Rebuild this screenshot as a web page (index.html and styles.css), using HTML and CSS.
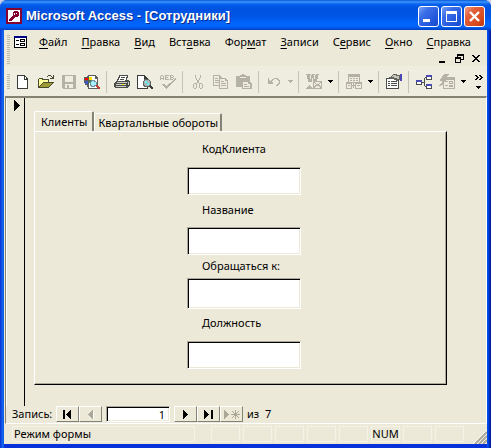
FILE: index.html
```html
<!DOCTYPE html>
<html lang="ru">
<head>
<meta charset="utf-8">
<title>Microsoft Access - [Сотрудники]</title>
<link rel="stylesheet" href="styles.css">
</head>
<body>
<div class="window">
  <header class="titlebar">
    <svg class="app-icon" width="16" height="16" viewBox="0 0 16 16" shape-rendering="crispEdges" aria-hidden="true">
      <rect width="16" height="16" fill="#84002e"/>
      <rect x="2" y="2" width="12" height="12" fill="#fff"/>
      <path fill="#84002e" d="M8 3h4v1h1v4h-1v1H9v1H8v1H7v1H6v1H3v-2h1v-1h1V9h1V8h1V4h1z"/>
      <path fill="#fff" d="M10 5h1v1h-1zM8 5h1v2H8z"/>
    </svg>
    <h1 class="title">Microsoft Access - [Сотрудники]</h1>
    <div class="captions">
      <button class="caption" aria-label="Свернуть"><svg width="19" height="19" viewBox="0 0 19 19" shape-rendering="crispEdges"><path fill="#fff" d="M4 12h7v3H4z"/></svg></button>
      <button class="caption" aria-label="Развернуть"><svg width="19" height="19" viewBox="0 0 19 19" shape-rendering="crispEdges"><path fill="#fff" fill-rule="evenodd" d="M4 4h11v11H4zM5 7v7h9V7z"/></svg></button>
      <button class="caption caption-close" aria-label="Закрыть"><svg width="19" height="19" viewBox="0 0 19 19"><path d="M5 5l9 9M14 5l-9 9" stroke="#fff" stroke-width="2.4"/></svg></button>
    </div>
  </header>

  <div class="client">
    <div class="menubar">
      <span class="grip"></span>
      <div class="menu-rows">
        <nav class="menu">
          <svg class="form-icon" width="13" height="12" viewBox="0 0 13 12" shape-rendering="crispEdges" aria-hidden="true">
            <path fill="#000" d="M0 0h13v12H0z"/><path fill="#fff" d="M1 2h11v9H1z"/><path fill="#000084" d="M0 0h13v2H0z"/>
            <path fill="#000" d="M2 4h3v1H2zM2 8h3v1H2zM6 3h5v3H6zM6 7h5v3H6z"/><path fill="#fff" d="M7 4h3v1H7zM7 8h3v1H7z"/>
          </svg>
          <button class="menu-item"><u>Ф</u>айл</button>
          <button class="menu-item"><u>П</u>равка</button>
          <button class="menu-item"><u>В</u>ид</button>
          <button class="menu-item">Вст<u>а</u>вка</button>
          <button class="menu-item">Фор<u>м</u>ат</button>
          <button class="menu-item"><u>З</u>аписи</button>
          <button class="menu-item">С<u>е</u>рвис</button>
          <button class="menu-item"><u>О</u>кно</button>
          <button class="menu-item"><u>С</u>правка</button>
        </nav>
        <div class="mdi">
          <button class="mdi-button" aria-label="Свернуть окно"><svg width="9" height="9" viewBox="0 0 9 9" shape-rendering="crispEdges"><path d="M1 7h6v2H1z"/></svg></button>
          <button class="mdi-button" aria-label="Восстановить окно"><svg width="9" height="9" viewBox="0 0 9 9" shape-rendering="crispEdges"><path fill-rule="evenodd" d="M2 0h7v6H6v3H0V3h2zM3 2v1h3v2h2V2zM1 5v3h4V5z"/></svg></button>
          <button class="mdi-button" aria-label="Закрыть окно"><svg width="9" height="9" viewBox="0 0 9 9" shape-rendering="crispEdges"><path d="M0 1h2v1h1v1h2V2h1V1h2v1H7v1H6v1H5v1h1v1h1v1h1v1H6V7H5V6H3v1H2v1H0V7h1V6h1V5h1V4H2V3H1V2H0z"/></svg></button>
        </div>
      </div>
    </div>

    <div class="toolbar" role="toolbar" aria-label="Режим формы">
      <span class="grip"></span>
      <button class="tool" aria-label="Создать"><svg width="16" height="16" viewBox="0 0 16 16" shape-rendering="crispEdges"><path fill="#393c39" d="M2 1h8v1h1v1h1v1h1v11H2z"/><path fill="#fff" d="M3 2h6v4h3v8H3zM10 3h1v2h-1z"/></svg></button>
      <button class="tool" aria-label="Открыть"><svg width="16" height="16" viewBox="0 0 16 16" shape-rendering="crispEdges"><path fill="#4a4a31" d="M10 1h3v1h-3zM9 2h1v1H9zM13 2h1v1h-1zM15 1h1v4h-4V4h2V3h1zM0 5h1V4h4v1h6v3h5v1h-1v1h-1v1h-1v1h-1v1h-1v1H0z"/><path fill="#ffff9c" d="M1 5h3v1h6v2H5v1H4v1H3v1H2v1H1z"/><path fill="#9c9a31" d="M5 9h9v1h-1v1h-1v1h-1v1H2v-1h1v-1h1v-1h1z"/></svg></button>
      <button class="tool" aria-label="Сохранить" disabled><svg width="16" height="16" viewBox="0 0 16 16" shape-rendering="crispEdges"><path fill="#b5b2a5" fill-rule="evenodd" d="M1 1h14v14H2v-1H1zM4 2v6h8V2zM4 10v4h2v-3h2v3h4v-4z"/></svg></button>
      <button class="tool" aria-label="Найти файл"><svg width="16" height="16" viewBox="0 0 16 16" shape-rendering="crispEdges"><path fill="#5a5d5a" d="M4 1h8v1h1v1h1v12H4v-2H3v-2H1V9H0V3h3V2h1z"/><path fill="#fff" d="M5 2h6v3h2v9H5z"/><path fill="#5a5d5a" d="M1 3h7v6H1z"/><path fill="#ff0000" d="M1 4h3v2H1z"/><path fill="#ffdf00" d="M5 3h3v3H5z"/><path fill="#4255c6" d="M1 7h3v3H1z"/><path fill="#319a31" d="M5 7h2v2H5z"/><path fill="#738e9c" d="M7 6h4v1h1v1h1v3h-1v1h-1v1H7v-1H6V8h1z"/><path fill="#a5efff" d="M8 7h2v1h2v3h-2v1H8v-1H7V8h1z"/><path fill="#c63c31" d="M12 11h2v1h1v1h1v2h-2v-1h-1v-1h-1z"/></svg></button>
      <span class="divider"></span>
      <button class="tool" aria-label="Печать"><svg width="16" height="16" viewBox="0 0 16 16" shape-rendering="crispEdges"><path fill="#4a4d4a" d="M5 1h9v3h-1v2h2v1h1v5h-1v1h-1v1H1v-1H0V9h1V8h1V7h1V5h1V3h1z"/><path fill="#fff" d="M6 2h7v1h-1v3h-1v1H4V6h1V4h1z"/><path fill="#4a4d4a" d="M7 3h4v1H7zM6 5h4v1H6z"/><path fill="#cecfc6" d="M3 8h10v1H3zM2 10h10v1H2zM2 12h10v1H2zM14 8h1v3h-1z"/><path fill="#ffff00" d="M8 10h2v1H8z"/></svg></button>
      <button class="tool" aria-label="Предварительный просмотр"><svg width="16" height="16" viewBox="0 0 16 16" shape-rendering="crispEdges"><path fill="#393c39" d="M0 1h8v1h1v1h1v1h1v11H0z"/><path fill="#fff" d="M1 2h6v3h3v9H1z"/><path fill="#636563" d="M7 5h5v1h1v1h1v4h-1v1h-1v1H7v-1H6V7h1z"/><path fill="#a5b6b5" d="M8 6h4v1h1v4h-1v1H8v-1H7V7h1z"/><path fill="#63f3f7" d="M8 7h2v2H8zM10 9h2v2h-2z"/><path fill="#393c39" d="M13 11h1v1h1v1h1v2h-2v-1h-1v-1h-1v-1h1z"/></svg></button>
      <button class="tool" aria-label="Орфография" disabled><svg width="16" height="16" viewBox="0 0 16 16" shape-rendering="crispEdges"><path fill="#b5b2a5" d="M1 1h2v1H1zM0 2h1v4H0zM3 2h1v4H3zM1 4h2v1H1zM5 1h4v1H6v1h2v1H6v1h3v1H5zM10 1h3v1h-2v1h2v1h-2v1h2v1h-3zM13 2h1v1h-1zM13 4h1v1h-1zM15 4h1v2h-1v1h-1v1h-1v1h-1v1h-1v1h-1v1H9v1H8v1H7v1H6v-1H5v-1H4v-1H3v-1H2v-1h3v1h1v1h1v-1h1v-1h1v-1h1V9h1V8h1V7h1V6h1V5h1z"/></svg></button>
      <span class="divider"></span>
      <button class="tool" aria-label="Вырезать" disabled><svg width="16" height="16" viewBox="0 0 16 16" shape-rendering="crispEdges"><path fill="#b5b2a5" d="M5 1h1v3H5zM10 1h1v3h-1zM6 4h1v2H6zM9 4h1v2H9zM7 6h2v3H7zM6 9h1v1H6zM9 9h1v1H9z"/><path fill="#b5b2a5" fill-rule="evenodd" d="M4 9h2v1h1v4H6v1H4v-1H3v-4h1zM4 10v4h2v-4zM10 9h2v1h1v4h-1v1h-2v-1H9v-4h1zM10 10v4h2v-4z"/></svg></button>
      <button class="tool" aria-label="Копировать" disabled><svg width="16" height="16" viewBox="0 0 16 16" shape-rendering="crispEdges"><path fill="#b5b2a5" d="M0 1h7v1h1v1h1v9H0z"/><path fill="#efebde" d="M1 2h5v2h2v7H1z"/><path fill="#b5b2a5" d="M2 4h3v1H2zM2 6h4v1H2zM2 8h4v1H2zM6 4h7v1h1v1h1v9H6z"/><path fill="#efebde" d="M7 5h5v2h2v7H7z"/><path fill="#b5b2a5" d="M8 7h3v1H8zM8 9h5v1H8zM8 11h5v1H8z"/></svg></button>
      <button class="tool" aria-label="Вставить" disabled><svg width="16" height="16" viewBox="0 0 16 16" shape-rendering="crispEdges"><path fill="#b5b2a5" d="M0 2h4V1h2V0h2v1h2v1h4v6h1v1h1v6H6v-2H0z"/><path fill="#efebde" d="M4 3h6v1H4zM7 8h5v2h2v4H7z"/><path fill="#b5b2a5" d="M8 10h3v1H8zM8 12h5v1H8z"/></svg></button>
      <span class="divider"></span>
      <button class="tool" aria-label="Отменить" disabled><svg width="16" height="16" viewBox="0 0 16 16" shape-rendering="crispEdges"><path fill="#b5b2a5" d="M2 4h1v2h1v1h1V6h1V5h2V4h4v1h1v1h1v4h-1v1h-1v1h-2v-1h1v-1h1V9h1V7h-1V6h-1V5H8v1H7v1H6v1h1v2H2z"/></svg></button>
      <button class="drop" aria-label="Список отмены" disabled><svg width="5" height="3" viewBox="0 0 5 3" shape-rendering="crispEdges"><path fill="#b5b2a5" d="M0 0h5v1H4v1H3v1H2V2H1V1H0z"/></svg></button>
      <span class="divider"></span>
      <button class="tool" aria-label="Связи с Office" disabled><svg width="16" height="16" viewBox="0 0 16 16" shape-rendering="crispEdges"><path fill="#b5b2a5" d="M0 0h5v1H4v4h1V1h1V0h3v1H8v4h1V1h1V0h3v1h-1v4h-1v3H2V5H1V1H0zM7 7h9v8H7z"/><path fill="#efebde" d="M6 4h1v4H6zM8 8h7v6H8z"/><path fill="#b5b2a5" d="M8 8h1v1h1v1h3V9h1V8h1v1h-1v1h-1v1h1v1h1v2h-1v-1h-1v-1h-3v1H9v1H8v-2h1v-1h1v-1H9V9H8zM3 11h1v1h1v1h1v1h1v1H0v-1h1v-1h1v-1h1z"/></svg></button>
      <button class="drop" aria-label="Список связей"><svg width="5" height="3" viewBox="0 0 5 3" shape-rendering="crispEdges"><path d="M0 0h5v1H4v1H3v1H2V2H1V1H0z"/></svg></button>
      <span class="divider"></span>
      <button class="tool" aria-label="Анализ" disabled><svg width="16" height="16" viewBox="0 0 16 16" shape-rendering="crispEdges"><path fill="#b5b2a5" d="M2 0h12v9H2z"/><path fill="#efebde" d="M3 3h10v5H3z"/><path fill="#b5b2a5" d="M4 4h2v1H4zM7 4h2v1H7zM10 4h2v1h-2zM4 6h2v1H4zM7 6h2v1H7zM10 6h2v1h-2zM0 8h6v7H0zM9 8h7v7H9zM6 11h3v1H6zM7 9h1v5H7z"/><path fill="#efebde" d="M1 10h4v4H1zM10 10h5v4h-5z"/><path fill="#b5b2a5" d="M2 11h2v1H2zM11 11h3v1h-3z"/></svg></button>
      <button class="drop" aria-label="Список анализа"><svg width="5" height="3" viewBox="0 0 5 3" shape-rendering="crispEdges"><path d="M0 0h5v1H4v1H3v1H2V2H1V1H0z"/></svg></button>
      <span class="divider"></span>
      <button class="tool" aria-label="Свойства"><svg width="16" height="16" viewBox="0 0 16 16" shape-rendering="crispEdges"><path fill="#4a4d4a" d="M0 4h13v11H0z"/><path fill="#fff" d="M1 5h11v9H1z"/><path fill="#4a4d4a" d="M2 7h2v1H2zM5 7h6v1H5zM2 9h2v1H2zM5 9h6v1H5zM2 11h2v1H2zM5 11h6v1H5z"/><path fill="#636563" d="M7 0h4v1h3v5h-2v1h-2V6H8V5H4V4H3V3h2V2h1V1h1z"/><path fill="#c6c3b5" d="M7 1h3v1h3v3h-2V4H8V3H6V2h1z"/><path fill="#4a49b5" d="M14 0h2v7h-2z"/></svg></button>
      <span class="divider"></span>
      <button class="tool" aria-label="Схема данных"><svg width="16" height="16" viewBox="0 0 16 16" shape-rendering="crispEdges"><path fill="#4a4d4a" d="M0 6h6v5H0zM10 1h6v5h-6zM10 10h6v5h-6zM6 8h2v1H6zM8 4h1v8H8zM9 3h1v1H9zM9 12h1v1H9z"/><path fill="#fff" d="M1 8h4v2H1zM11 3h4v2h-4zM11 12h4v2h-4z"/><path fill="#4a49b5" d="M0 6h6v2H0zM10 1h6v2h-6zM10 10h6v2h-6z"/></svg></button>
      <button class="tool" aria-label="Новый объект" disabled><svg width="16" height="16" viewBox="0 0 16 16" shape-rendering="crispEdges"><path fill="#b5b2a5" d="M4 3h12v12H4v-4H3V5h1z"/><path fill="#efebde" d="M5 6h10v8H5z"/><path fill="#b5b2a5" d="M6 7h3v1H6zM10 7h4v3h-4zM6 11h3v1H6zM10 11h4v2h-4zM5 0h5v1H9v1H8v1H7v1h2v1H8v1H7v1H6v1H5v1H4v1H3v1H2v1H0v-1h1v-1h1V9h1V7H1V5h1V4h1V2h1V1h1z"/><path fill="#efebde" d="M11 8h2v1h-2z"/></svg></button>
      <button class="drop" aria-label="Список объектов"><svg width="5" height="3" viewBox="0 0 5 3" shape-rendering="crispEdges"><path d="M0 0h5v1H4v1H3v1H2V2H1V1H0z"/></svg></button>
      <button class="overflow" aria-label="Другие кнопки"><svg width="8" height="14" viewBox="0 0 8 14" shape-rendering="crispEdges"><path d="M0 0h2v1h1v1h1v1H3v1H2v1H0V4h1V3h1V2H1V1H0zM4 0h2v1h1v1h1v1H7v1H6v1H4V4h1V3h1V2H5V1H4zM1 11h5v1H5v1H4v1H3v-1H2v-1H1z"/></svg></button>
    </div>

    <main class="form-view">
      <div class="form-body">
        <div class="selector"><svg width="6" height="11" viewBox="0 0 6 11" shape-rendering="crispEdges"><path d="M0 0h1v1h1v1h1v1h1v1h1v1h1v1H5v1H4v1H3v1H2v1H1v1H0z"/></svg></div>
        <div class="sheet">
          <div class="tabs" role="tablist">
            <button class="tab tab-active" role="tab" aria-selected="true">Клиенты</button>
            <button class="tab" role="tab" aria-selected="false">Квартальные обороты</button>
          </div>
          <section class="panel">
            <label for="code">КодКлиента</label>
            <input class="field" id="code" type="text">
            <label for="name">Название</label>
            <input class="field" id="name" type="text">
            <label for="contact">Обращаться к:</label>
            <input class="field field-tall" id="contact" type="text">
            <label for="post">Должность</label>
            <input class="field" id="post" type="text">
          </section>
        </div>
      </div>
      <div class="records">
        <label class="records-label" for="record">Запись:</label>
        <div class="nav-group">
          <button class="nav" aria-label="Первая запись"><svg width="9" height="9" viewBox="0 0 9 9" shape-rendering="crispEdges"><path d="M0 0h2v9H0zM8 0v9H7V8H6V7H5V6H4V5H3V4h1V3h1V2h1V1h1V0z"/></svg></button>
          <button class="nav" aria-label="Предыдущая запись" disabled><svg width="9" height="9" viewBox="0 0 9 9" shape-rendering="crispEdges"><path fill="#fff" d="M7 1h1v9H7z"/><path fill="#aca899" d="M7 0v9H6V8H5V7H4V6H3V5H2V4h1V3h1V2h1V1h1V0z"/></svg></button>
        </div>
        <input class="record" id="record" type="text" value="1">
        <div class="nav-group">
          <button class="nav" aria-label="Следующая запись"><svg width="9" height="9" viewBox="0 0 9 9" shape-rendering="crispEdges"><path d="M2 0h1v1h1v1h1v1h1v1h1v1H6v1H5v1H4v1H3v1H2z"/></svg></button>
          <button class="nav" aria-label="Последняя запись"><svg width="9" height="9" viewBox="0 0 9 9" shape-rendering="crispEdges"><path d="M0 0h1v1h1v1h1v1h1v1h1v1H4v1H3v1H2v1H1v1H0zM7 0h2v9H7z"/></svg></button>
          <button class="nav" aria-label="Новая запись" disabled><svg width="17" height="9" viewBox="0 0 17 9" shape-rendering="crispEdges"><path fill="#aca899" d="M1 0h1v1h1v1h1v1h1v1h1v1H5v1H4v1H3v1H2v1H1zM12 0h1v3h1V2h1V1h1v1h-1v1h-1v1h3v1h-3v1h1v1h1v1h-1V7h-1V6h-1v3h-1V6h-1v1h-1v1H9V7h1V6h1V5H8V4h3V3h-1V2H9V1h1v1h1v1h1z"/></svg></button>
        </div>
        <span class="records-total">из&nbsp; 7</span>
      </div>
    </main>

    <footer class="status">
      <span class="cell cell-main">Режим формы</span>
      <span class="cell"></span>
      <span class="cell"></span>
      <span class="cell"></span>
      <span class="cell"></span>
      <span class="cell"></span>
      <span class="cell">NUM</span>
      <span class="cell"></span>
      <span class="cell"></span>
      <svg class="sizer" width="14" height="14" viewBox="0 0 14 14" aria-hidden="true"><path stroke="#fff" d="M0 14L14 0M4 14L14 4M8 14L14 8"/><path stroke="#aca899" stroke-width="2" d="M2 14L14 2M6 14l8-8M10 14l4-4"/></svg>
    </footer>
  </div>
</div>
</body>
</html>
```

FILE: styles.css
```css
* { box-sizing: border-box; }

body {
  margin: 0;
  background: #c6cfe7;
  color: #000;
  font: 11px/14px "Noto Sans", sans-serif;
}

button, input {
  margin: 0;
  padding: 0;
  border: 0;
  border-radius: 0;
  background: none;
  color: inherit;
  font: inherit;
}

svg { display: block; flex: none; }

.window {
  display: flex;
  flex-direction: column;
  min-height: 100vh;
  border-radius: 7px 7px 0 0;
  overflow: hidden;
  background: linear-gradient(90deg, #0831d9 0, #166aee 3px, #0855dd 4px, #0855dd calc(100% - 4px), #0048f1 calc(100% - 3px), #00138c 100%);
}

/* Title bar */
.titlebar {
  display: flex;
  align-items: center;
  height: 30px;
  padding: 2px 6px 0;
  background: linear-gradient(#0858d6 0, #3d95ff 2px, #0a62ee 4px, #0053e1 8px, #0055e5 16px, #0066ff 24px, #0060f8 27px, #0040c0 30px);
}

.app-icon { margin-right: 4px; }

.title {
  flex: 1;
  margin: 0;
  color: #fff;
  font: bold 13px/18px "Liberation Sans", sans-serif;
  text-shadow: 1px 1px #0a2a8c;
  white-space: nowrap;
}

.captions { display: flex; gap: 2px; }

.caption {
  width: 21px;
  height: 21px;
  border: 1px solid #fff;
  border-radius: 3px;
  background: linear-gradient(135deg, #7aa2f5 0, #3b6fe8 30%, #2458dc 70%, #1848c8 100%);
}

.caption-close { background: linear-gradient(135deg, #f0a088 0, #e2603c 30%, #d8481c 75%, #b83410 100%); }

/* Client area */
.client {
  flex: 1;
  display: flex;
  flex-direction: column;
  margin: 0 4px;
  border-bottom: 4px solid #0831d9;
  background: #ece9d8;
}

.grip {
  flex: none;
  width: 3px;
  background: repeating-linear-gradient(#bdbaa9 0 1px, #ece9d8 1px 2px);
}

.menubar {
  display: flex;
  height: 36px;
  padding: 5px 6px 1px 3px;
}

.menubar .grip { height: 29px; }

.menu-rows { flex: 1; }

.menu {
  display: flex;
  align-items: center;
  gap: 14px;
  padding-left: 4px;
}

.form-icon { margin-right: -2px; }

.menu-item { white-space: nowrap; }

.menu-item u { text-underline-offset: 2px; }

.mdi {
  display: flex;
  justify-content: flex-end;
  gap: 8px;
  padding-top: 5px;
}

.mdi-button { width: 9px; }

.toolbar {
  display: flex;
  align-items: center;
  height: 30px;
  padding: 1px 4px 0 3px;
  background: #efeddf;
}

.toolbar .grip { height: 15px; margin-right: 1px; }

.tool {
  flex: none;
  display: flex;
  justify-content: center;
  width: 23px;
}

.drop {
  flex: none;
  display: flex;
  justify-content: center;
  width: 10px;
}

.divider {
  flex: none;
  width: 1px;
  height: 22px;
  margin: 0 3px;
  background: #c6c3b5;
}

.overflow { margin-left: auto; }

/* Form */
.form-view {
  flex: 1;
  display: flex;
  flex-direction: column;
  margin-left: 1px;
  border: 1px solid #fff;
  border-top: 2px solid #848273;
  border-left-color: #848273;
}

.form-body {
  flex: 1;
  display: flex;
}

.selector {
  width: 19px;
  padding: 2px 0 0 7px;
  border-right: 1px solid #000;
  border-left: 1px solid #fff;
}

.sheet {
  flex: 1;
  padding: 13px 39px 20px 9px;
}

.tabs {
  display: flex;
  align-items: flex-end;
}

.tab {
  height: 18px;
  padding: 0 2px 0 3px;
  border: 1px solid #fff;
  border-right: 2px solid #848273;
  border-bottom: 0;
  border-radius: 2px 2px 0 0;
  line-height: 17px;
  white-space: nowrap;
}

.tab-active {
  height: 20px;
  padding: 0 5px 0 6px;
}

.panel {
  display: grid;
  grid-template-rows: 25px 36px 24px 32px 19px 38px 25px 43px;
  align-items: start;
  justify-items: start;
  padding: 10px 0 0 152px;
  border: 1px solid #fff;
  border-right-color: #000;
  border-bottom-color: #000;
  box-shadow: inset -1px -1px #aca899;
}

.panel label { padding-left: 15px; }

.field, .record {
  border: 1px solid #aca899;
  border-right-color: #fff;
  border-bottom-color: #fff;
  background: #fff;
  box-shadow: inset 1px 1px #000, inset -1px -1px #ece9d8;
}

.field {
  width: 114px;
  height: 28px;
  padding: 0 4px;
}

.field-tall { height: 31px; }

/* Record navigation */
.records {
  display: flex;
  align-items: center;
  gap: 4px;
  padding: 0 6px 1px;
}

.records-label { width: 40px; }

.nav-group { display: flex; }

.nav {
  display: flex;
  align-items: center;
  justify-content: center;
  width: 23px;
  height: 16px;
  border: 1px solid #fff;
  border-right-color: #848273;
  border-bottom-color: #848273;
}

.record {
  width: 64px;
  height: 16px;
  padding: 0 4px;
  text-align: right;
}

/* Status bar */
.status {
  display: flex;
  align-items: center;
  gap: 3px;
  height: 20px;
  padding-left: 8px;
}

.cell {
  width: 29px;
  height: 16px;
  border: 1px solid #f5f3e8;
  text-align: center;
}

.cell-main {
  width: 183px;
  margin-right: 13px;
  padding-left: 1px;
  text-align: left;
}

.sizer { align-self: flex-end; margin-left: auto; }
```
